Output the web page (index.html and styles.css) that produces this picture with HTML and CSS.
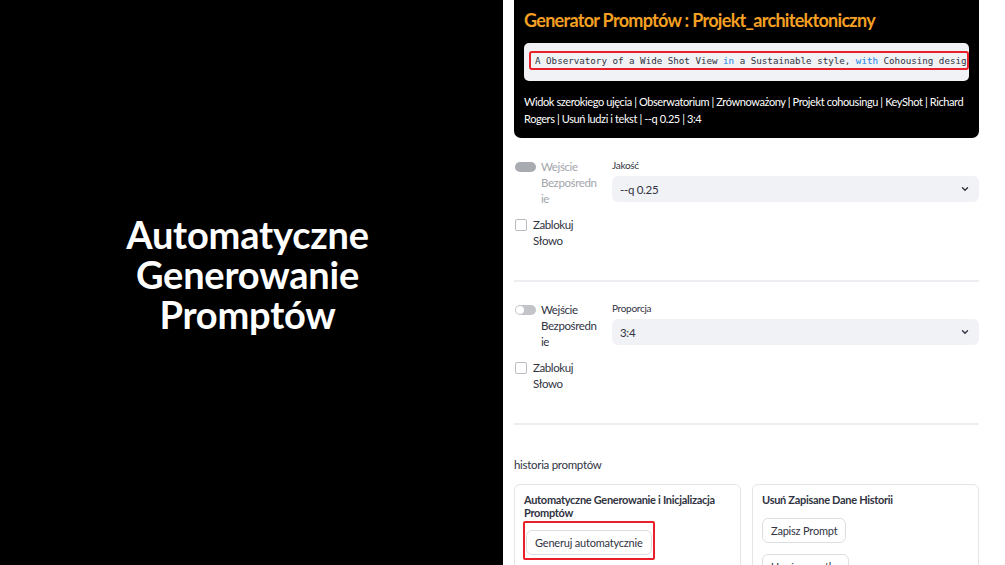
FILE: index.html
```html
<!DOCTYPE html>
<html lang="pl">
<head>
    <meta charset="UTF-8">
    <meta name="viewport" content="width=device-width, initial-scale=1.0">
    <title>Generator Promptów</title>
    <link rel="stylesheet" href="styles.css">
</head>
<body>
    <div class="hero">
        <h1>Automatyczne<br>Generowanie<br>Promptów</h1>
    </div>

    <div class="app">
        <div class="result">
            <h2>Generator Promptów : Projekt_architektoniczny</h2>
            <div class="code">
                <div class="mark">
                    <code>A Observatory of a Wide Shot View <span class="kw">in</span> a Sustainable style, <span class="kw">with</span> Cohousing design by KeyShot</code>
                </div>
            </div>
            <p class="tags">Widok szerokiego ujęcia | Obserwatorium | Zrównoważony | Projekt cohousingu | KeyShot | Richard Rogers | Usuń ludzi i tekst | --q 0.25 | 3:4</p>
        </div>

        <div class="row first">
            <div class="side">
                <label class="toggle off">
                    <span class="track"></span>
                    <span class="text">Wejście Bezpośredn<wbr>ie</span>
                </label>
                <label class="check">
                    <span class="box"></span>
                    <span class="text">Zablokuj Słowo</span>
                </label>
            </div>
            <div class="field">
                <div class="caption">Jakość</div>
                <div class="select">
                    <span>--q 0.25</span>
                    <svg width="10" height="10" viewBox="0 0 10 10"><path d="M2.5 3.8 L5 6.2 L7.5 3.8" fill="none" stroke="#31333f" stroke-width="1.4" stroke-linecap="round"/></svg>
                </div>
            </div>
        </div>

        <hr>

        <div class="row">
            <div class="side">
                <label class="toggle">
                    <span class="track"></span>
                    <span class="text">Wejście Bezpośredn<wbr>ie</span>
                </label>
                <label class="check">
                    <span class="box"></span>
                    <span class="text">Zablokuj Słowo</span>
                </label>
            </div>
            <div class="field">
                <div class="caption">Proporcja</div>
                <div class="select">
                    <span>3:4</span>
                    <svg width="10" height="10" viewBox="0 0 10 10"><path d="M2.5 3.8 L5 6.2 L7.5 3.8" fill="none" stroke="#31333f" stroke-width="1.4" stroke-linecap="round"/></svg>
                </div>
            </div>
        </div>

        <hr>

        <p class="history">historia promptów</p>

        <div class="panels">
            <div class="panel">
                <h3>Automatyczne Generowanie i Inicjalizacja Promptów</h3>
                <div class="mark btn-mark">
                    <button>Generuj automatycznie</button>
                </div>
            </div>
            <div class="panel">
                <h3>Usuń Zapisane Dane Historii</h3>
                <button>Zapisz Prompt</button>
                <button>Usuń wszystko</button>
            </div>
        </div>
    </div>
</body>
</html>
```

FILE: styles.css
```css
body{
    margin: 0;
    display: flex;
    width: 1005px;
    height: 565px;
    overflow: hidden;
    font-family: Lato, "Open Sans", sans-serif;
    color: #31333f;
    background: #fff;
}

.hero{
    width: 503px;
    flex: none;
    background: #000;
    display: flex;
    align-items: center;
    justify-content: center;
}

.hero h1{
    margin: 0 8px 18px 0;
    color: #fff;
    text-align: center;
    font-size: 38px;
    line-height: 40px;
    font-weight: 700;
    letter-spacing: -0.2px;
}

.app{
    width: 465px;
    padding: 0 26px 0 11px;
    overflow: hidden;
    letter-spacing: -0.3px;
}

.result{
    background: #000;
    border-radius: 0 0 7px 7px;
    padding: 9px 10px 11px 10px;
}

.result h2{
    margin: 0 0 12px 0;
    color: #f5a023;
    font-size: 18px;
    font-weight: 700;
    letter-spacing: -0.7px;
}

.code{
    background: #f0f2f6;
    border-radius: 5px;
    padding: 8px 0 11px 5px;
    overflow: hidden;
}

.mark{
    border: 2px solid #e8202a;
    border-radius: 3px;
}

.code .mark{
    padding: 1px 4px;
    white-space: nowrap;
    overflow: hidden;
    letter-spacing: 0;
    font-size: 9.2px;
    line-height: 13px;
}

.code code{
    font-family: "DejaVu Sans Mono", monospace;
    font-size: 9.2px;
    line-height: 13px;
    color: #31333f;
}

.code .kw{
    color: #1c83e1;
}

.tags{
    margin: 12px 0 0 0;
    color: #fff;
    font-size: 11px;
    line-height: 17px;
    letter-spacing: -0.4px;
}

.row{
    display: flex;
    gap: 17px;
    padding: 20px 0 31px 0;
}

.row.first{
    padding-top: 21px;
}

.side{
    width: 81px;
    flex: none;
    font-size: 11.5px;
    line-height: 16px;
    letter-spacing: -0.4px;
}

.toggle, .check{
    display: flex;
    align-items: flex-start;
}

.toggle .text{
    width: 60px;
    flex: none;
}

.track{
    position: relative;
    flex: none;
    width: 21px;
    height: 10px;
    margin: 3px 5px 0 1px;
    border-radius: 5px;
    background: #c2c4c9;
}

.track::after{
    content: "";
    position: absolute;
    left: 1px;
    top: 1px;
    width: 8px;
    height: 8px;
    border-radius: 50%;
    background: #fff;
}

.toggle.off{
    color: #a3a5ab;
}

.toggle.off .track{
    background: #a8abb0;
}

.toggle.off .track::after{
    display: none;
}

.check{
    margin-top: 10px;
}

.box{
    flex: none;
    width: 10px;
    height: 10px;
    margin: 2px 6px 0 1px;
    border: 1px solid #b9bbc1;
    border-radius: 2px;
    background: #fff;
}

.field{
    flex: 1;
}

.caption{
    font-size: 10px;
    line-height: 13px;
    margin: 0 0 4px 0;
}

.select{
    display: flex;
    justify-content: space-between;
    align-items: center;
    height: 26px;
    padding: 0 9px 0 8px;
    border-radius: 6px;
    background: #f0f2f6;
    font-size: 11.5px;
}

hr{
    margin: 0;
    border: none;
    border-top: 2px solid #eceef1;
}

.history{
    margin: 33px 0 13px 0;
    font-size: 11.5px;
}

.panels{
    display: flex;
    gap: 11px;
}

.panel{
    flex: 1;
    border: 1px solid #e3e5e9;
    border-radius: 6px;
    padding: 8px 9px 20px 9px;
}

.panel h3{
    margin: 0;
    font-size: 11px;
    line-height: 13px;
    font-weight: 700;
}

.panel button{
    display: block;
    font-family: inherit;
    font-size: 11px;
    letter-spacing: -0.2px;
    color: #31333f;
    background: #fff;
    border: 1px solid #dcdee3;
    border-radius: 6px;
    padding: 5px 8px;
    margin-top: 11px;
}

.panel h3 + button{
    margin-top: 12px;
}

.btn-mark{
    display: inline-block;
    margin: 2px 0 0 -1px;
    padding: 7px 1px 3px 1px;
    border-radius: 2px;
}

.btn-mark button{
    margin-top: 0;
    padding: 5px 8px;
}
```
